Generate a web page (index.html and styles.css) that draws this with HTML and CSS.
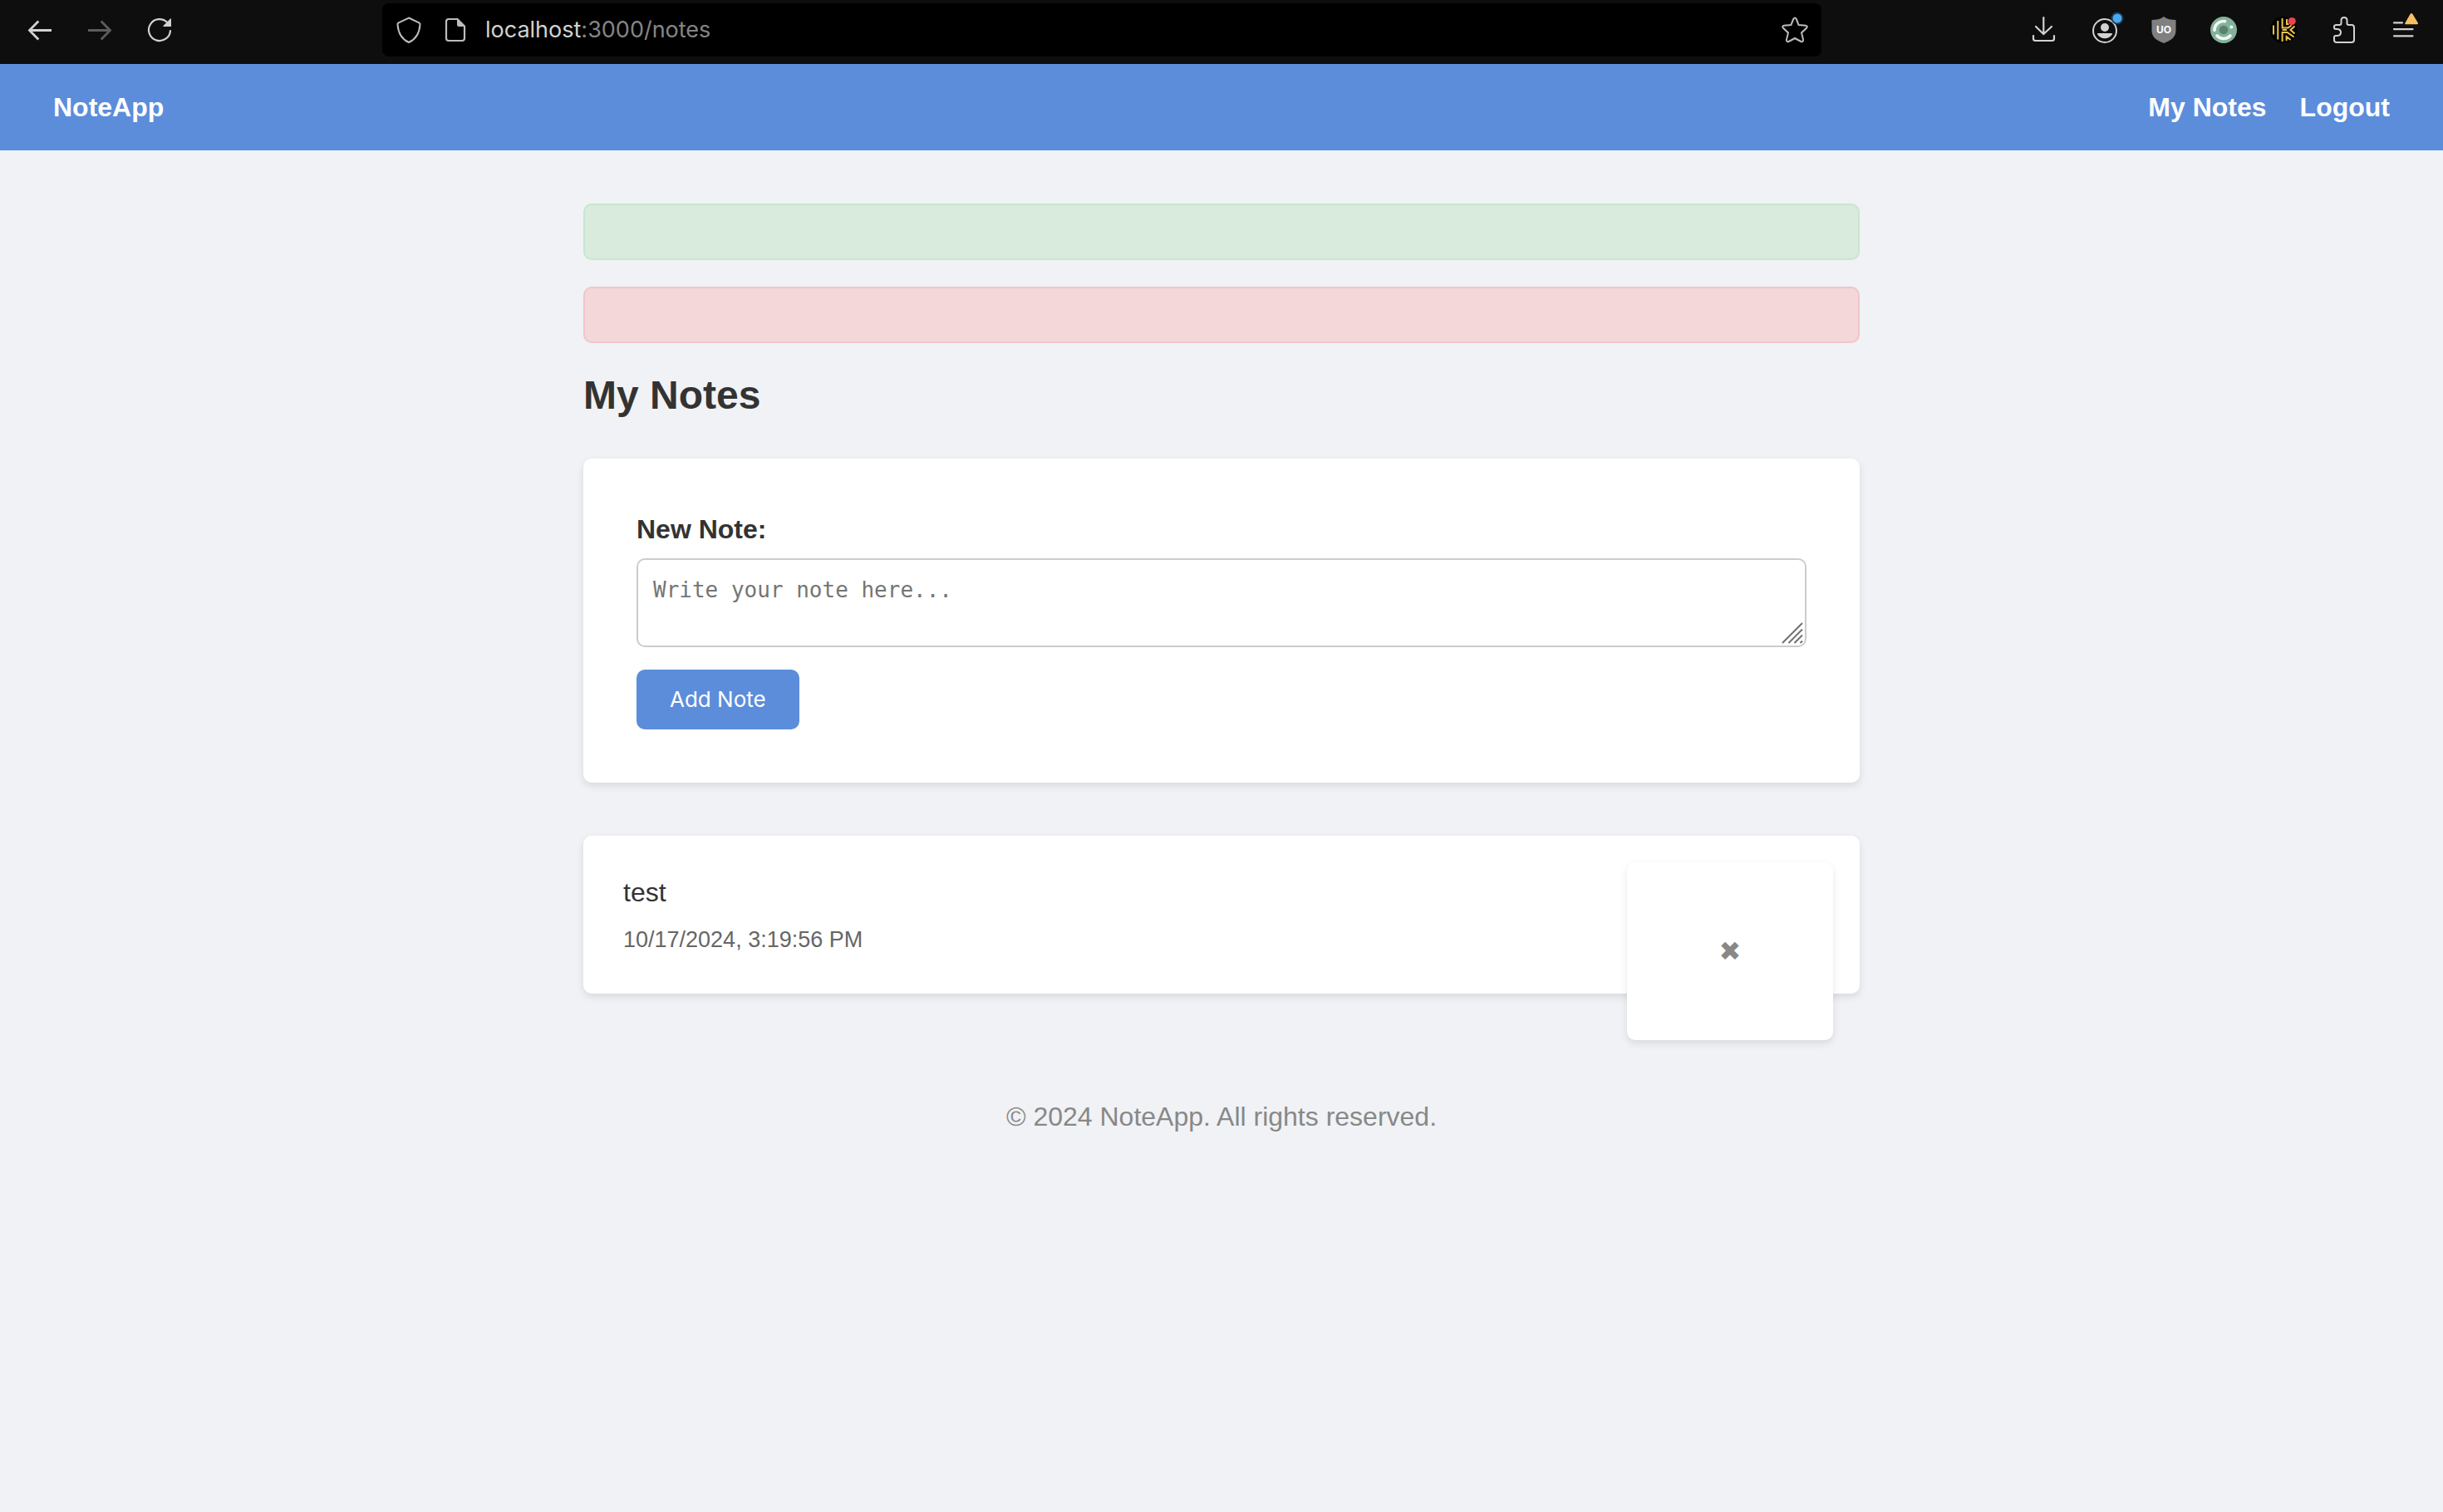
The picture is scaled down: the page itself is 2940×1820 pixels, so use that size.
FILE: index.html
```html
<!DOCTYPE html>
<html lang="en">
<head>
<meta charset="utf-8">
<title>My Notes - NoteApp</title>
<link rel="stylesheet" href="styles.css">
</head>
<body>
<div class="toolbar">
  <div class="tools">
    <button class="tool" type="button" aria-label="Back">
      <svg class="icon" viewBox="0 0 32 32"><path d="M3.5 16.5H30M14.3 5.5 3.5 16.5l10.8 11" stroke-width="2.8"/></svg>
    </button>
    <button class="tool tool-off" type="button" aria-label="Forward">
      <svg class="icon" viewBox="0 0 32 32"><path d="M2 16.5H28.500M17.700 5.500 28.500 16.500l-10.800 11" stroke-width="2.800"/></svg>
    </button>
    <button class="tool" type="button" aria-label="Reload">
      <svg class="icon" viewBox="0 0 32 32"><path d="M29 16.200A13 13 0 1 1 25.300 7" stroke-width="2.200"/><path class="solid" d="M29 2.500q1-.8 1 .5v9H21q-1.500 0-.5-1z"/></svg>
    </button>
  </div>
  <div class="address">
    <svg class="icon" viewBox="0 0 32 32"><path d="M16 1.500 28.200 7.300q1.500.7 1.300 2.300C28.700 20 25 27 16 31 7 27 3.300 20 2.500 9.600 2.300 8 2.500 7.700 3.800 7.300z" stroke-width="2"/></svg>
    <svg class="icon" viewBox="0 0 32 32"><path d="M18.500 3H8Q5 3 5 6v20q0 3 3 3h16q3 0 3-3V11.500" stroke-width="2.200"/><path class="solid" d="M18 2h1l9 9v1h-8q-2 0-2-2z"/></svg>
    <div class="url" role="textbox" aria-label="Address" contenteditable="true" spellcheck="false"><span class="host">localhost</span>:3000/notes</div>
    <button class="tool" type="button" aria-label="Bookmark">
      <svg class="icon" viewBox="0 0 32 32"><path d="M14.300 2.800q1.700-2.500 3.400 0L20.600 10l8.400.8q3 .6 1 3L24 19.400l2 8.200q.3 3.200-2.600 2.400L16 26l-7.400 4q-2.900.8-2.600-2.400l2-8.200L2 13.800q-2-2.400 1-3L11.400 10z" stroke-width="2"/></svg>
    </button>
  </div>
  <div class="tools">
    <button class="tool" type="button" aria-label="Downloads">
      <svg class="icon" viewBox="0 0 32 32"><path d="M15.300 1v20M6 12l9.300 9L25 12M3 23v3.500Q3 29 5.500 29h20q2.500 0 2.500-2.500V23" stroke-width="2.200" stroke-linecap="round"/></svg>
    </button>
    <button class="tool" type="button" aria-label="Account">
      <svg class="icon" viewBox="0 0 32 32"><circle cx="17" cy="17" r="14" stroke-width="2"/><circle class="solid" cx="17" cy="13" r="5"/><path class="solid" d="M9 20h16q1.500 0 .8 1.300C22 28 12 28 8.200 21.300 7.500 20 9 20 9 20z"/><circle cx="32" cy="2" r="6.500" fill="#4aa8ee" stroke="#1c3c54" stroke-width="2"/></svg>
    </button>
    <button class="tool" type="button" aria-label="uBlock Origin">
      <svg class="icon" viewBox="0 0 32 32"><path d="M16 0c4 3 9 4 14.500 4v13C30.500 25 24 29 16 32 8 29 1.500 25 1.500 17V4C7 4 12 3 16 0z" fill="#808080" stroke="none"/><text class="shield-text" x="16" y="20">UO</text></svg>
    </button>
    <button class="tool" type="button" aria-label="Privacy extension">
      <svg class="icon" viewBox="0 0 32 32"><circle cx="16" cy="16" r="16" fill="#84b29b" stroke="none"/><circle cx="16" cy="16" r="5.300" fill="#5a8270" stroke="none"/><path d="M5 16.500A11 11 0 0 1 17.500 5.600M8 23a11 11 0 0 0 16 0" stroke="#f3f7f4" stroke-width="3.600" stroke-linecap="round"/><circle cx="25.400" cy="12.400" r="2" fill="#f3f7f4" stroke="none"/></svg>
    </button>
    <button class="tool" type="button" aria-label="Maze extension">
      <svg class="icon" viewBox="0 0 32 32"><circle cx="16" cy="16" r="16" fill="#000" stroke="none"/><path d="M4 10.500v11M9.300 5v22.500M14.600 2v11.500h7l4-3M20 3v6h2.500M14.600 30V19h6l8 5.500M19.600 29v-5l5 4M29.500 11.500 24.500 16l5 4.500M14.600 16h5.500" stroke="#efc547" stroke-width="2"/><circle cx="26.200" cy="5.600" r="4.600" fill="#e8434f" stroke="none"/></svg>
    </button>
    <button class="tool" type="button" aria-label="Extensions">
      <svg class="icon" viewBox="0 0 32 32"><path d="M8 10h3.500q2 0 2-2V4.500q0-3.500 3.500-3.500t3.500 3.500V8q0 2 2 2H26q3 0 3 3v15q0 3-3 3H8q-3 0-3-3v-3q0-2 2-2h2q4-.5 4-4t-4-4H7q-2 0-2-2v-1q0-2 3-2z" stroke-width="2"/></svg>
    </button>
    <button class="tool" type="button" aria-label="Menu">
      <svg class="icon" viewBox="0 0 32 32"><path d="M5 7.400h10M5 15.200h22.500M5 23.300h22.500" stroke-width="2.200" stroke-linecap="round"/><path d="M24.500-3q1.500-2 3 0l6.300 10.400q.8 1.900-1 1.900H19.500q-2 0-1-1.900z" fill="#f5bf62" stroke="none"/></svg>
    </button>
  </div>
</div>

<header class="navbar">
  <a class="nav-link" href="/">NoteApp</a>
  <nav class="nav-links">
    <a class="nav-link" href="/notes">My Notes</a>
    <a class="nav-link" href="/logout">Logout</a>
  </nav>
</header>

<main class="container">
  <div class="alert alert-success" role="status"></div>
  <div class="alert alert-error" role="alert"></div>
  <h1 class="title">My Notes</h1>

  <form class="card note-form">
    <label class="label" for="note">New Note:</label>
    <div class="field">
      <textarea class="note-input" id="note" rows="2" placeholder="Write your note here..."></textarea>
      <svg class="grip" viewBox="0 0 26 26" aria-hidden="true"><path d="M1 25 25 1M8.500 25 25 8.500M15.500 25 25 15.500M22.500 25l2.500-2.500"/></svg>
    </div>
    <button class="submit" type="submit">Add Note</button>
  </form>

  <article class="card note">
    <p class="note-text">test</p>
    <time class="note-date" datetime="2024-10-17T15:19:56">10/17/2024, 3:19:56 PM</time>
    <form class="card delete-form">
      <button class="delete" type="submit" aria-label="Delete note">✖</button>
    </form>
  </article>
</main>

<footer class="footer">© 2024 NoteApp. All rights reserved.</footer>
</body>
</html>
```
FILE: styles.css
```css
* {
  box-sizing: border-box;
}

body {
  margin: 0;
  background: #f0f2f5;
  color: #333;
  font-family: "Liberation Sans", Arial, sans-serif;
  font-size: 32px;
  line-height: 40px;
}

button {
  border: 0;
  font-family: inherit;
  cursor: pointer;
}

/* Browser toolbar */
.toolbar {
  display: flex;
  align-items: center;
  padding: 4px 32px 9px;
  background: #0e0e0e;
}

.tools {
  display: flex;
  gap: 40px;
}

.tool {
  display: flex;
  padding: 0;
  background: none;
}

.tool-off {
  opacity: 0.4;
}

.icon {
  flex: none;
  width: 32px;
  height: 32px;
  overflow: visible;
  fill: none;
  stroke: #d2d2d2;
}

.address .icon {
  stroke: #bcbcbc;
}

.icon .solid {
  fill: #d2d2d2;
  stroke: none;
}

.address .icon .solid {
  fill: #bcbcbc;
  stroke: none;
}

.shield-text {
  fill: #fff;
  stroke: none;
  font: bold 12px Inter, sans-serif;
  text-anchor: middle;
}

.address {
  display: flex;
  flex: 1;
  align-items: center;
  height: 64px;
  margin: 0 252px;
  padding: 0 16px;
  gap: 24px;
  border-radius: 8px;
  background: #000;
}

.url {
  flex: 1;
  margin-left: -4px;
  color: #858585;
  font-family: Inter, sans-serif;
  font-size: 27px;
  outline: none;
}

.host {
  color: #d2d2d2;
}

/* Site navigation */
.navbar {
  display: flex;
  justify-content: space-between;
  padding: 32px 64px;
  background: #5c8ddb;
}

.nav-links {
  display: flex;
  gap: 40px;
}

.nav-link {
  color: #fff;
  font-weight: bold;
  text-decoration: none;
}

/* Page content */
.container {
  max-width: 1536px;
  margin: 64px auto;
}

.alert {
  height: 68px;
  margin-bottom: 32px;
  border: 2px solid;
  border-radius: 10px;
}

.alert-success {
  border-color: #c8e6cd;
  background: #d9ebdc;
}

.alert-error {
  border-color: #f0c6ca;
  background: #f3d7d9;
}

.title {
  margin: 0 0 45px;
  font-size: 48px;
  line-height: 62px;
}

.card {
  border-radius: 10px;
  background: #fff;
  box-shadow: 0 4px 10px rgba(0, 0, 0, 0.1);
}

.note-form {
  margin-bottom: 64px;
  padding: 64px;
}

.label {
  display: block;
  margin-bottom: 14px;
  font-weight: bold;
  line-height: 42px;
}

.field {
  position: relative;
  margin-bottom: 27px;
}

.note-input {
  display: block;
  width: 100%;
  height: 107px;
  padding: 18px;
  border: 2px solid #ccc;
  border-radius: 10px;
  background: #fff;
  color: #333;
  font-family: "DejaVu Sans Mono", monospace;
  font-size: 26px;
  line-height: 36px;
  resize: none;
}

.note-input::placeholder {
  color: #757575;
}

.grip {
  position: absolute;
  right: 4px;
  bottom: 4px;
  width: 26px;
  height: 26px;
  fill: none;
  stroke: #707070;
  stroke-width: 2;
  pointer-events: none;
}

.submit {
  display: block;
  padding: 16px 40px;
  border-radius: 10px;
  background: #5c8ddb;
  color: #fff;
  font-family: Inter, sans-serif;
  font-size: 26px;
  line-height: 40px;
}

.note {
  position: relative;
  padding: 48px;
}

.note-text {
  margin: 0 0 20px;
}

.note-date {
  display: block;
  color: #666;
  font-size: 27px;
  line-height: 34px;
}

/* Delete control floats over the corner of its note */
.delete-form {
  position: absolute;
  top: 32px;
  right: 32px;
  display: flex;
  align-items: center;
  justify-content: center;
  width: 248px;
  height: 214px;
}

.delete {
  padding: 0 40px;
  background: none;
  color: #888;
  font-family: "DejaVu Sans", sans-serif;
  font-size: 32px;
  line-height: 40px;
}

.footer {
  padding: 64px 32px;
  color: #888;
  text-align: center;
}
```
